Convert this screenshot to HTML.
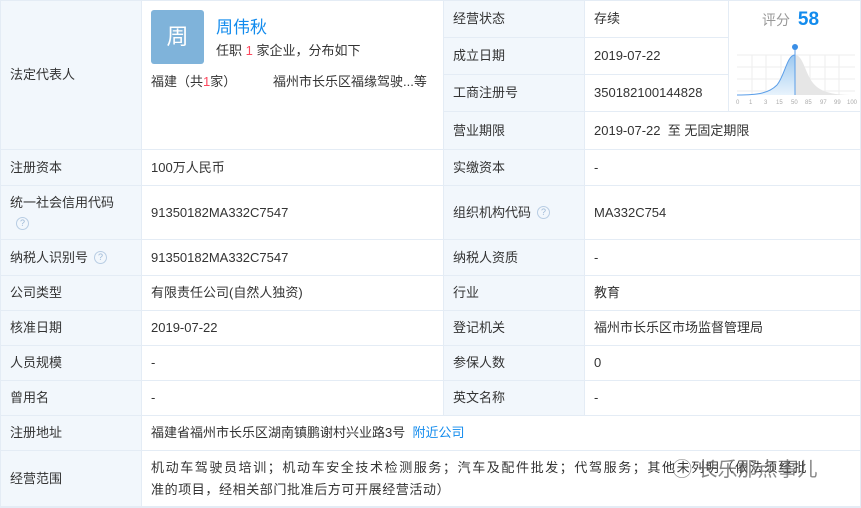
<!DOCTYPE html>
<html><head><meta charset="utf-8"><style>
*{margin:0;padding:0;box-sizing:border-box}
body{width:861px;height:508px;background:#fff;font-family:"Liberation Sans","Noto Sans CJK SC",sans-serif;font-size:13px;color:#333;position:relative;overflow:hidden}
.c{position:absolute;border-right:1px solid #e4ecf5;border-bottom:1px solid #e4ecf5;display:flex;align-items:center;padding-left:9px;line-height:20px}
.l{background:#f2f7fc}
.q{display:inline-block;width:13px;height:13px;border:1px solid #b8cde3;border-radius:50%;font-size:9px;line-height:11px;text-align:center;color:#9db8d6;margin-left:6px;vertical-align:middle}
a{color:#128bed;text-decoration:none}
.r{color:#fd485e}
</style></head><body>
<div style="position:absolute;left:0;top:0;width:861px;height:508px;border:1px solid #e4ecf5;border-right:none"></div>
<div class="c l" style="left:1px;top:1px;width:141px;height:149px">法定代表人</div>
<div class="c" style="left:142px;top:1px;width:302px;height:149px;display:block;padding:0">
  <div style="position:absolute;left:9px;top:9px;width:53px;height:54px;background:#7fb3da;border-radius:3px;color:#fff;font-size:22px;text-align:center;line-height:54px">周</div>
  <div style="position:absolute;left:74px;top:16px;font-size:17px;color:#128bed;line-height:22px">周伟秋</div>
  <div style="position:absolute;left:74px;top:40px;line-height:20px">任职 <span class="r">1</span> 家企业，分布如下</div>
  <div style="position:absolute;left:9px;top:71px;line-height:20px">福建（共<span class="r">1</span>家）</div>
  <div style="position:absolute;left:131px;top:71px;line-height:20px">福州市长乐区福缘驾驶...等</div>
</div>
<div class="c l" style="left:444px;top:1px;width:141px;height:37px">经营状态</div>
<div class="c" style="left:585px;top:1px;width:144px;height:37px">存续</div>
<div class="c l" style="left:444px;top:38px;width:141px;height:37px">成立日期</div>
<div class="c" style="left:585px;top:38px;width:144px;height:37px">2019-07-22</div>
<div class="c l" style="left:444px;top:75px;width:141px;height:37px">工商注册号</div>
<div class="c" style="left:585px;top:75px;width:144px;height:37px">350182100144828</div>
<div class="c" style="left:729px;top:1px;width:132px;height:111px;display:block;padding:0">
  <div style="position:absolute;left:33px;top:9px;font-size:14px;color:#999;line-height:20px">评分 <b style="color:#128bed;font-size:19px;margin-left:4px">58</b></div>
  <svg style="position:absolute;left:6px;top:40px" width="124" height="66" viewBox="0 0 124 66">
    <defs><linearGradient id="g" x1="0" y1="0" x2="0" y2="1"><stop offset="0" stop-color="#9cc8f0"/><stop offset="1" stop-color="#e8f3fc"/></linearGradient></defs>
    <g stroke="#eee" stroke-width="1"><line x1="2" y1="14" x2="120" y2="14"/><line x1="2" y1="26" x2="120" y2="26"/><line x1="2" y1="38" x2="120" y2="38"/><line x1="2" y1="50" x2="120" y2="50"/>
    <line x1="17" y1="14" x2="17" y2="54"/><line x1="31" y1="14" x2="31" y2="54"/><line x1="46" y1="14" x2="46" y2="54"/><line x1="75" y1="14" x2="75" y2="54"/><line x1="90" y1="14" x2="90" y2="54"/><line x1="104" y1="14" x2="104" y2="54"/></g>
    <path d="M2 54 C24 54 34 52 42 44 C50 34 52 14 60 14 L60 54 Z" fill="url(#g)"/>
    <path d="M60 14 C68 14 70 32 78 42 C86 52 100 54 120 54 L60 54 Z" fill="#e6e6e6"/>
    <path d="M2 54 C24 54 34 52 42 44 C50 34 52 14 60 14" fill="none" stroke="#5b9ee8" stroke-width="1"/>
    <line x1="60" y1="8" x2="60" y2="54" stroke="#5b9ee8"/>
    <circle cx="60" cy="6" r="3" fill="#3a8ee6"/>
    <g font-size="6" fill="#aaa" font-family="Liberation Sans"><text x="1" y="63">0</text><text x="14" y="63">1</text><text x="29" y="63">3</text><text x="41" y="63">15</text><text x="56" y="63">50</text><text x="70" y="63">85</text><text x="85" y="63">97</text><text x="99" y="63">99</text><text x="112" y="63">100</text></g>
  </svg>
</div>
<div class="c l" style="left:444px;top:112px;width:141px;height:38px">营业期限</div>
<div class="c" style="left:585px;top:112px;width:276px;height:38px">2019-07-22&nbsp; 至 无固定期限</div>
<div class="c l" style="left:1px;top:150px;width:141px;height:36px">注册资本</div>
<div class="c" style="left:142px;top:150px;width:302px;height:36px">100万人民币</div>
<div class="c l" style="left:444px;top:150px;width:141px;height:36px">实缴资本</div>
<div class="c" style="left:585px;top:150px;width:276px;height:36px">-</div>
<div class="c l" style="left:1px;top:186px;width:141px;height:54px;display:block;padding-top:7px">统一社会信用代码<br><span class="q" style="margin-left:6px">?</span></div>
<div class="c" style="left:142px;top:186px;width:302px;height:54px">91350182MA332C7547</div>
<div class="c l" style="left:444px;top:186px;width:141px;height:54px">组织机构代码<span class="q">?</span></div>
<div class="c" style="left:585px;top:186px;width:276px;height:54px">MA332C754</div>
<div class="c l" style="left:1px;top:240px;width:141px;height:36px">纳税人识别号<span class="q">?</span></div>
<div class="c" style="left:142px;top:240px;width:302px;height:36px">91350182MA332C7547</div>
<div class="c l" style="left:444px;top:240px;width:141px;height:36px">纳税人资质</div>
<div class="c" style="left:585px;top:240px;width:276px;height:36px">-</div>
<div class="c l" style="left:1px;top:276px;width:141px;height:35px">公司类型</div>
<div class="c" style="left:142px;top:276px;width:302px;height:35px">有限责任公司(自然人独资)</div>
<div class="c l" style="left:444px;top:276px;width:141px;height:35px">行业</div>
<div class="c" style="left:585px;top:276px;width:276px;height:35px">教育</div>
<div class="c l" style="left:1px;top:311px;width:141px;height:35px">核准日期</div>
<div class="c" style="left:142px;top:311px;width:302px;height:35px">2019-07-22</div>
<div class="c l" style="left:444px;top:311px;width:141px;height:35px">登记机关</div>
<div class="c" style="left:585px;top:311px;width:276px;height:35px">福州市长乐区市场监督管理局</div>
<div class="c l" style="left:1px;top:346px;width:141px;height:35px">人员规模</div>
<div class="c" style="left:142px;top:346px;width:302px;height:35px">-</div>
<div class="c l" style="left:444px;top:346px;width:141px;height:35px">参保人数</div>
<div class="c" style="left:585px;top:346px;width:276px;height:35px">0</div>
<div class="c l" style="left:1px;top:381px;width:141px;height:35px">曾用名</div>
<div class="c" style="left:142px;top:381px;width:302px;height:35px">-</div>
<div class="c l" style="left:444px;top:381px;width:141px;height:35px">英文名称</div>
<div class="c" style="left:585px;top:381px;width:276px;height:35px">-</div>
<div class="c l" style="left:1px;top:416px;width:141px;height:35px">注册地址</div>
<div class="c" style="left:142px;top:416px;width:719px;height:35px">福建省福州市长乐区湖南镇鹏谢村兴业路3号&nbsp;&nbsp;<a>附近公司</a></div>
<div class="c l" style="left:1px;top:451px;width:141px;height:56px">经营范围</div>
<div class="c" style="left:142px;top:451px;width:719px;height:56px;display:block;padding-top:6px;line-height:22px;white-space:nowrap"><span style="letter-spacing:1.6px">机动车驾驶员培训；机动车安全技术检测服务；汽车及配件批发；代驾服务；其他未列明（依法须经批</span><br><span style="letter-spacing:0.6px">准的项目，经相关部门批准后方可开展经营活动）</span></div>
<div style="position:absolute;left:672px;top:458px;font-size:20px;color:#555;opacity:.7;line-height:24px;white-space:nowrap">◯ 长乐那点事儿</div>
</body></html>
